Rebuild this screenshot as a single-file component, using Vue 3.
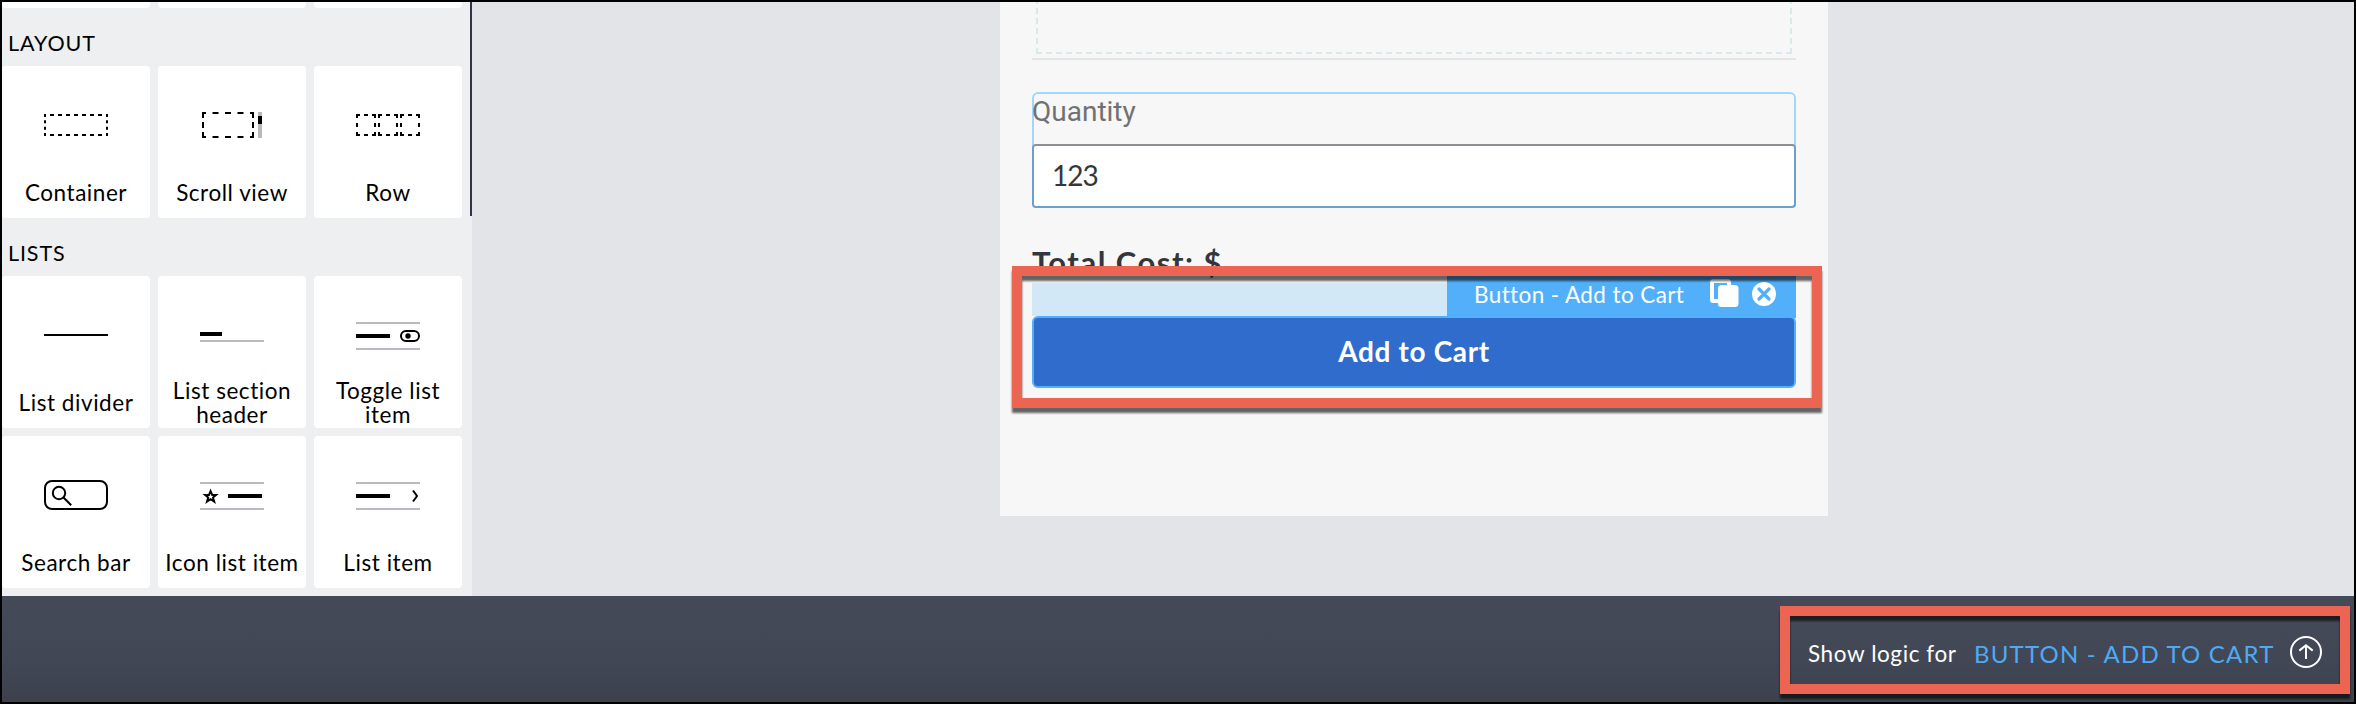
<script setup>
const groups = [
  {
    title: 'Layout',
    items: [
      { icon: 'container', lines: ['Container'] },
      { icon: 'scroll', lines: ['Scroll view'] },
      { icon: 'row', lines: ['Row'] },
    ],
  },
  {
    title: 'Lists',
    items: [
      { icon: 'divider', lines: ['List divider'] },
      { icon: 'section', lines: ['List section', 'header'] },
      { icon: 'toggle', lines: ['Toggle list', 'item'] },
      { icon: 'search', lines: ['Search bar'] },
      { icon: 'iconItem', lines: ['Icon list item'] },
      { icon: 'listItem', lines: ['List item'] },
    ],
  },
]
</script>

<template>
  <div class="window">
    <div class="workspace">
      <aside class="sidebar">
        <div class="stubs"><i></i><i></i><i></i></div>
        <section v-for="g in groups" :key="g.title">
          <h2>{{ g.title }}</h2>
          <div class="grid">
            <div v-for="item in g.items" :key="item.icon" class="card">
              <svg width="148" height="104" fill="none" stroke="#000" stroke-width="2">
                <template v-if="item.icon === 'container'">
                  <path d="M42 49H106M42 69H106" stroke-dasharray="4 4" stroke-dashoffset="2" />
                  <path d="M43 48V70M105 48V70" stroke-dasharray="3 3.33" stroke-dashoffset="0" />
                </template>
                <template v-else-if="item.icon === 'scroll'">
                  <path d="M44 47H96M44 71H96" stroke-dasharray="6 6.5" stroke-dashoffset="2" />
                  <path d="M45 46V72M95 46V72" stroke-dasharray="6 4" stroke-dashoffset="0" />
                  <path d="M102 46V72" stroke="#b9b8be" stroke-width="4" />
                  <path d="M102 50V58" stroke-width="4" />
                </template>
                <template v-else-if="item.icon === 'row'">
                  <g v-for="x in [0, 22, 44]" :key="x" :transform="`translate(${x} 0)`">
                    <path d="M42 49H62M42 69H62" stroke-dasharray="4 4" />
                    <path d="M43 48V70M61 48V70" stroke-dasharray="4 5" />
                  </g>
                </template>
                <path v-else-if="item.icon === 'divider'" d="M42 59H106" />
                <template v-else-if="item.icon === 'section'">
                  <path d="M42 58H64" stroke-width="4" />
                  <path d="M42 65H106" stroke="#b9b8be" />
                </template>
                <template v-else-if="item.icon === 'search'">
                  <rect x="43" y="45" width="62" height="28" rx="7" />
                  <circle cx="57" cy="57" r="6.2" />
                  <path d="M61.5 61.5L69.2 69.2" />
                </template>
                <template v-else>
                  <path d="M42 47H106M42 73H106" stroke="#b9b8be" />
                  <path v-if="item.icon === 'iconItem'" d="M70 60H104" stroke-width="4" />
                  <path v-else d="M42 60H76" stroke-width="4" />
                  <template v-if="item.icon === 'toggle'">
                    <rect x="87" y="55" width="18" height="10" rx="5" />
                    <circle cx="94" cy="60" r="2.7" fill="#000" stroke="none" />
                  </template>
                  <path
                    v-if="item.icon === 'iconItem'"
                    d="M52.6 55.2L54.2 59H58L55 61.5L56.2 65.6L52.6 63.2L49 65.6L50.2 61.5L47.2 59H51Z"
                  />
                  <path v-if="item.icon === 'listItem'" d="M99 54.5L103 60L99 65.5" />
                </template>
              </svg>
              <div class="label"><span v-for="l in item.lines" :key="l">{{ l }}</span></div>
            </div>
          </div>
        </section>
        <div class="scrollbar"></div>
      </aside>

      <main class="canvas">
        <div class="screen">
          <div class="dropzone"></div>
          <div class="field">
            <label>Quantity</label>
            <div class="input">123</div>
          </div>
          <div class="total">Total Cost: $</div>
          <div class="selection">
            <div class="spacer"></div>
            <div class="tab">
              <span>Button - Add to Cart</span>
              <svg class="copy" width="30" height="30">
                <rect x="2" y="2" width="17" height="20" rx="1.5" fill="none" stroke="#fff" stroke-width="4" />
                <rect x="8" y="6" width="20.5" height="22" rx="3.5" fill="#fff" />
              </svg>
              <svg width="24" height="24">
                <circle cx="12" cy="12" r="12" fill="#fff" />
                <path d="M7 7L17 17M17 7L7 17" stroke="#52b0fa" stroke-width="3.2" stroke-linecap="round" />
              </svg>
            </div>
          </div>
          <div class="button">Add to Cart</div>
        </div>
      </main>
    </div>

    <footer>
      <span class="hint">Show logic for</span>
      <span class="target">Button - Add to Cart</span>
      <svg width="32" height="32" fill="none" stroke="#fff" stroke-width="2">
        <circle cx="16" cy="16" r="15" />
        <path d="M16 23V9.5M9.3 14.6L16 9.2L22.7 14.6" />
      </svg>
    </footer>

    <div class="callout callout-button"></div>
    <div class="callout callout-logic"></div>
    <div class="edge"></div>
  </div>
</template>

<style>
body {
  margin: 0;
}
</style>

<style scoped>
* {
  box-sizing: border-box;
}
.window {
  position: relative;
  display: flex;
  flex-direction: column;
  width: 2356px;
  height: 704px;
  padding: 2px;
  overflow: hidden;
  font-family: Lato, "Liberation Sans", sans-serif;
  white-space: nowrap;
}
.workspace {
  display: flex;
  height: 594px;
  background: #e3e4e8;
}
.sidebar {
  position: relative;
  width: 470px;
  background: #eeeff1;
}
.stubs,
.grid {
  display: grid;
  grid-template-columns: repeat(3, 148px);
  gap: 8px;
}
.stubs i {
  height: 6px;
  background: #fff;
  border-radius: 0 0 4px 4px;
}
h2 {
  height: 58px;
  margin: 0;
  padding: 0 0 0 6px;
  line-height: 71px;
  font-size: 21.5px;
  font-weight: 400;
  letter-spacing: 0.9px;
  text-transform: uppercase;
}
.card {
  height: 152px;
  background: #fff;
  border-radius: 4px;
}
.card svg {
  display: block;
}
.label {
  display: flex;
  flex-direction: column;
  justify-content: center;
  height: 46px;
  text-align: center;
  font-size: 22.5px;
  line-height: 24px;
  letter-spacing: 0.55px;
}
.scrollbar {
  position: absolute;
  top: 0;
  right: 0;
  width: 2px;
  height: 214px;
  background: #2f3445;
}
.canvas {
  display: flex;
  flex: 1;
  justify-content: center;
  padding-left: 2px;
}
.screen {
  display: flex;
  flex-direction: column;
  width: 828px;
  height: 514px;
  padding: 0 32px;
  background: #f7f7f7;
}
.dropzone {
  position: relative;
  height: 58px;
  border-bottom: 2px solid #e4e4e4;
}
.dropzone::before {
  content: "";
  position: absolute;
  inset: 0 4px 4px;
  background:
    repeating-linear-gradient(90deg, #dbe8eb 0 6px, transparent 6px 10px) bottom / 100% 2px no-repeat,
    repeating-linear-gradient(0deg, #dbe8eb 0 6px, transparent 6px 10px) left / 2px 100% no-repeat,
    repeating-linear-gradient(0deg, #dbe8eb 0 6px, transparent 6px 10px) right / 2px 100% no-repeat;
}
.field {
  display: flex;
  flex-direction: column;
  height: 116px;
  margin-top: 32px;
  box-shadow: inset 0 0 0 2px #a4d5fb;
  border-radius: 6px;
}
.field label {
  height: 52px;
  line-height: 40px;
  font-family: Roboto, sans-serif;
  font-size: 28px;
  color: #707174;
}
.input {
  height: 64px;
  padding-left: 18px;
  border: 2px solid #6ca0cc;
  border-top-color: #8c8c9a;
  border-radius: 4px;
  background: #fff;
  color: #33373d;
  font-size: 28px;
  line-height: 58px;
  letter-spacing: -1px;
}
.total {
  height: 62px;
  padding-top: 36px;
  color: #33373d;
  font-size: 31px;
  font-weight: 700;
  line-height: 36px;
  letter-spacing: 1.5px;
}
.selection {
  display: flex;
  align-items: flex-end;
  height: 46px;
}
.spacer {
  flex: 1;
  height: 33px;
  background: #d3e8f6;
}
.tab {
  display: flex;
  align-items: center;
  width: 349px;
  height: 48px;
  margin-bottom: -2px;
  padding: 0 20px 0 27px;
  background: #52b0fa;
  color: #fff;
  font-size: 22.5px;
  letter-spacing: 0.4px;
}
.tab span {
  width: 236px;
}
.copy {
  margin-right: 12px;
}
.button {
  z-index: 1;
  height: 72px;
  border: 2px solid #52b0fa;
  border-radius: 6px;
  background: #306ccb;
  color: #fff;
  font-size: 28px;
  font-weight: 700;
  line-height: 67px;
  letter-spacing: 0.65px;
  text-align: center;
}
footer {
  display: flex;
  align-items: center;
  height: 106px;
  padding: 4px 0 0 1806px;
  background: linear-gradient(#454a58, #424755 60%, #3d414e);
  color: #fff;
}
footer svg {
  margin-top: 2px;
}
.hint {
  width: 166px;
  padding-top: 4px;
  font-size: 22.5px;
  letter-spacing: 0.6px;
}
.target {
  width: 316px;
  padding-top: 4px;
  color: #4eaaf3;
  font-size: 24px;
  letter-spacing: 1.2px;
  text-transform: uppercase;
}
.callout {
  position: absolute;
  z-index: 2;
  border: 10px solid #ec6552;
  filter: drop-shadow(0 5px 1.2px rgba(0, 0, 0, 0.6));
}
.callout-button {
  left: 1012px;
  top: 266px;
  width: 810px;
  height: 142px;
}
.callout-logic {
  left: 1780px;
  top: 606px;
  width: 570px;
  height: 88px;
}
.edge {
  position: absolute;
  z-index: 3;
  inset: 0;
  border: 2px solid #000;
}
</style>
